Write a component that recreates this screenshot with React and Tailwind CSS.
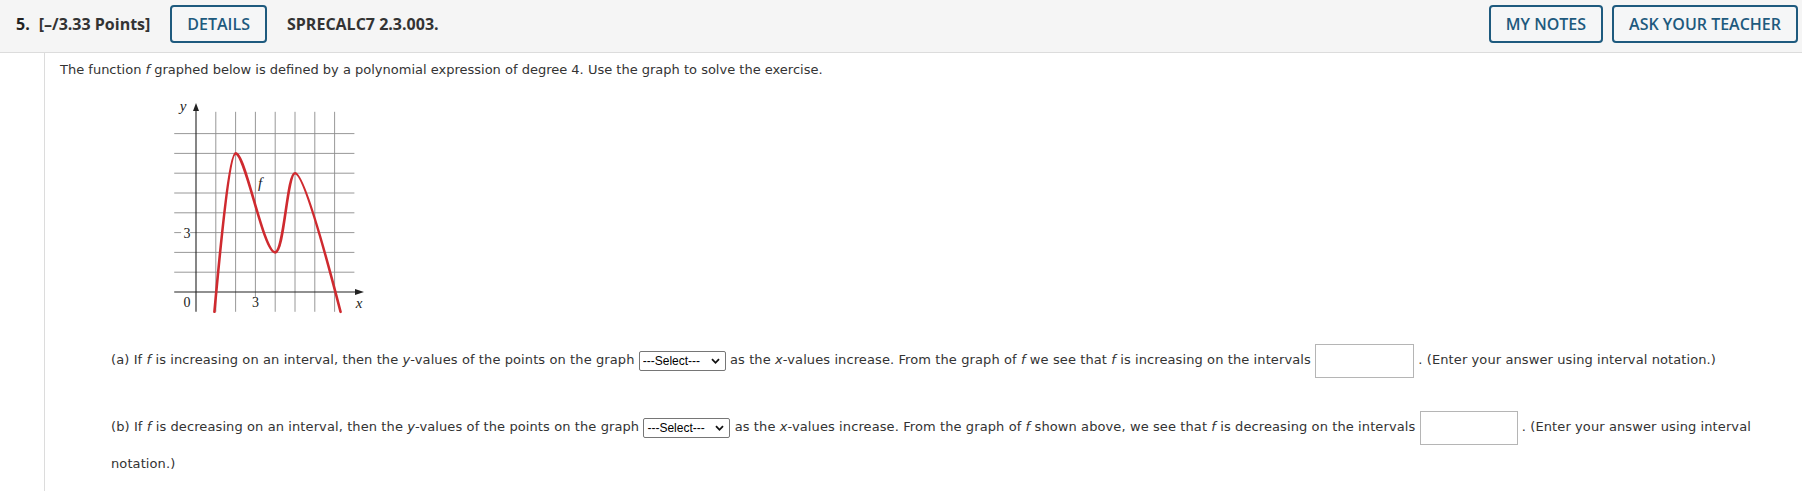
import React from 'react';

const X = (x) => 31 + 19.8 * x;
const Y = (y) => 196 - 19.8 * y;

const Graph = () => {
    const rows = [1, 2, 3, 4, 5, 6, 7, 8];
    const cols = [1, 2, 3, 4, 5, 6, 7];
    return (
        <svg width="210" height="225" viewBox="0 0 210 225" className="block">
            {/* grid */}
            {rows.map((r) => (
                <line key={'h' + r} x1={X(-1.1)} x2={X(8)} y1={Y(r)} y2={Y(r)} stroke="#8c8c8c" strokeWidth="0.9" />
            ))}
            {cols.map((c) => (
                <line key={'v' + c} x1={X(c)} x2={X(c)} y1={Y(9.1)} y2={Y(-1)} stroke="#8c8c8c" strokeWidth="0.9" />
            ))}
            {/* label backgrounds */}
            <rect x={X(-0.75)} y={Y(3) - 8} width="9" height="15" fill="#fff" />
            <rect x={X(3) - 5} y={Y(-0.25)} width="10" height="15" fill="#fff" />
            {/* axes */}
            <line x1={X(-1.1)} x2={194} y1={Y(0)} y2={Y(0)} stroke="#222" strokeWidth="1.1" />
            <line x1={X(0)} x2={X(0)} y1={Y(-1)} y2={13} stroke="#222" strokeWidth="1.1" />
            <polygon points={`${X(0)},7 ${X(0) - 3},15 ${X(0) + 3},15`} fill="#222" />
            <polygon points={`199,${Y(0)} 190,${Y(0) - 3} 190,${Y(0) + 3}`} fill="#222" />
            {/* labels */}
            <text x="18" y="15" fontSize="15" fontStyle="italic" textAnchor="middle" fontFamily="'Liberation Serif', serif" fill="#222">y</text>
            <text x="22" y="211" fontSize="14" textAnchor="middle" fontFamily="'Liberation Serif', serif" fill="#222">0</text>
            <text x={X(-0.45)} y={Y(3) + 5} fontSize="14" textAnchor="middle" fontFamily="'Liberation Serif', serif" fill="#222">3</text>
            <text x={X(3)} y="211" fontSize="14" textAnchor="middle" fontFamily="'Liberation Serif', serif" fill="#222">3</text>
            <text x="194" y="212" fontSize="15" fontStyle="italic" textAnchor="middle" fontFamily="'Liberation Serif', serif" fill="#222">x</text>
            <text x="95" y="92" fontSize="15" fontStyle="italic" textAnchor="middle" fontFamily="'Liberation Serif', serif" fill="#222">f</text>
            {/* curve */}
            <path
                d={`M${X(0.93)},${Y(-1)} C${X(1.25)},${Y(2.5)} ${X(1.7)},${Y(7)} ${X(2)},${Y(7)} C${X(2.5)},${Y(7)} ${X(3.4)},${Y(2)} ${X(4)},${Y(2)} C${X(4.45)},${Y(2)} ${X(4.6)},${Y(6)} ${X(5)},${Y(6)} C${X(5.4)},${Y(6)} ${X(6.4)},${Y(2.5)} ${X(7.3)},${Y(-1)}`}
                fill="none"
                stroke="#cf2a2f"
                strokeWidth="2.6"
                strokeLinecap="round"
            />
        </svg>
    );
};

const Select = () => (
    <span className="relative inline-block align-middle w-[87px] h-[20px]">
        <select className="block appearance-none w-[87px] h-[20px] border border-[#767676] rounded-[2px] bg-white pl-[3px] text-[12px] text-black tracking-normal font-['Liberation_Sans',sans-serif] leading-none">
            <option>---Select---</option>
            <option>increase</option>
            <option>decrease</option>
        </select>
        <svg className="absolute right-[6px] top-[7px] pointer-events-none" width="9" height="7" viewBox="0 0 9 7">
            <path d="M1 1.2 L4.5 4.8 L8 1.2" fill="none" stroke="#111" strokeWidth="1.8" />
        </svg>
    </span>
);

const Answer = ({ w }) => (
    <input type="text" className={`align-middle h-[34px] border border-[#b5b5b5] bg-white ${w}`} />
);

const HeaderButton = ({ children }) => (
    <button className="h-[38px] px-[15px] border-2 border-[#1e5a7e] rounded-[4px] text-[#1e5a7e] text-[16px] font-semibold bg-[#f5f6f7] uppercase">
        {children}
    </button>
);

export default function App() {
    return (
        <div className="w-[1802px] h-[491px] bg-white overflow-hidden font-['DejaVu_Sans',Verdana,sans-serif] text-[#333]">
            {/* Header */}
            <div className="h-[53px] bg-[#f5f5f5] border-b border-[#dcdcdc] flex items-start pt-[5px] pl-[16px] pr-[4px] font-['Open_Sans',sans-serif]">
                <div className="flex items-center h-[38px] w-full">
                    <span className="text-[16px] font-bold text-[#222]">5.</span>
                    <span className="ml-[9px] text-[16px] font-bold text-[#333]">[–/3.33 Points]</span>
                    <div className="ml-[20px]">
                        <HeaderButton>Details</HeaderButton>
                    </div>
                    <span className="ml-[20px] text-[16px] font-bold text-[#333]">SPRECALC7 2.3.003.</span>
                    <div className="ml-auto flex gap-[9px]">
                        <HeaderButton>My Notes</HeaderButton>
                        <HeaderButton>Ask Your Teacher</HeaderButton>
                    </div>
                </div>
            </div>

            {/* Question body */}
            <div className="ml-[44px] border-l border-[#dcdcdc] pl-[15px] pt-[9px] h-[438px] text-[13px]">
                <p className="leading-[16px]">
                    The function <i>f</i> graphed below is defined by a polynomial expression of degree 4. Use the graph to solve the exercise.
                </p>

                <div className="ml-[105px] mt-[18px]">
                    <Graph />
                </div>

                <div className="ml-[51px] mt-[20px] leading-[37px] tracking-[0.1px]">
                    (a) If <i>f</i> is increasing on an interval, then the <i>y</i>-values of the points on the graph <Select /> as the <i>x</i>-values increase. From the graph of <i>f</i> we see that <i>f</i> is increasing on the intervals <Answer w="w-[99px]" /> . (Enter your answer using interval notation.)
                </div>

                <div className="ml-[51px] mt-[30px] leading-[37px] tracking-[0.1px] pr-[40px]">
                    (b) If <i>f</i> is decreasing on an interval, then the <i>y</i>-values of the points on the graph <Select /> as the <i>x</i>-values increase. From the graph of <i>f</i> shown above, we see that <i>f</i> is decreasing on the intervals <Answer w="w-[98px]" /> . (Enter your answer using interval notation.)
                </div>
            </div>
        </div>
    );
}
